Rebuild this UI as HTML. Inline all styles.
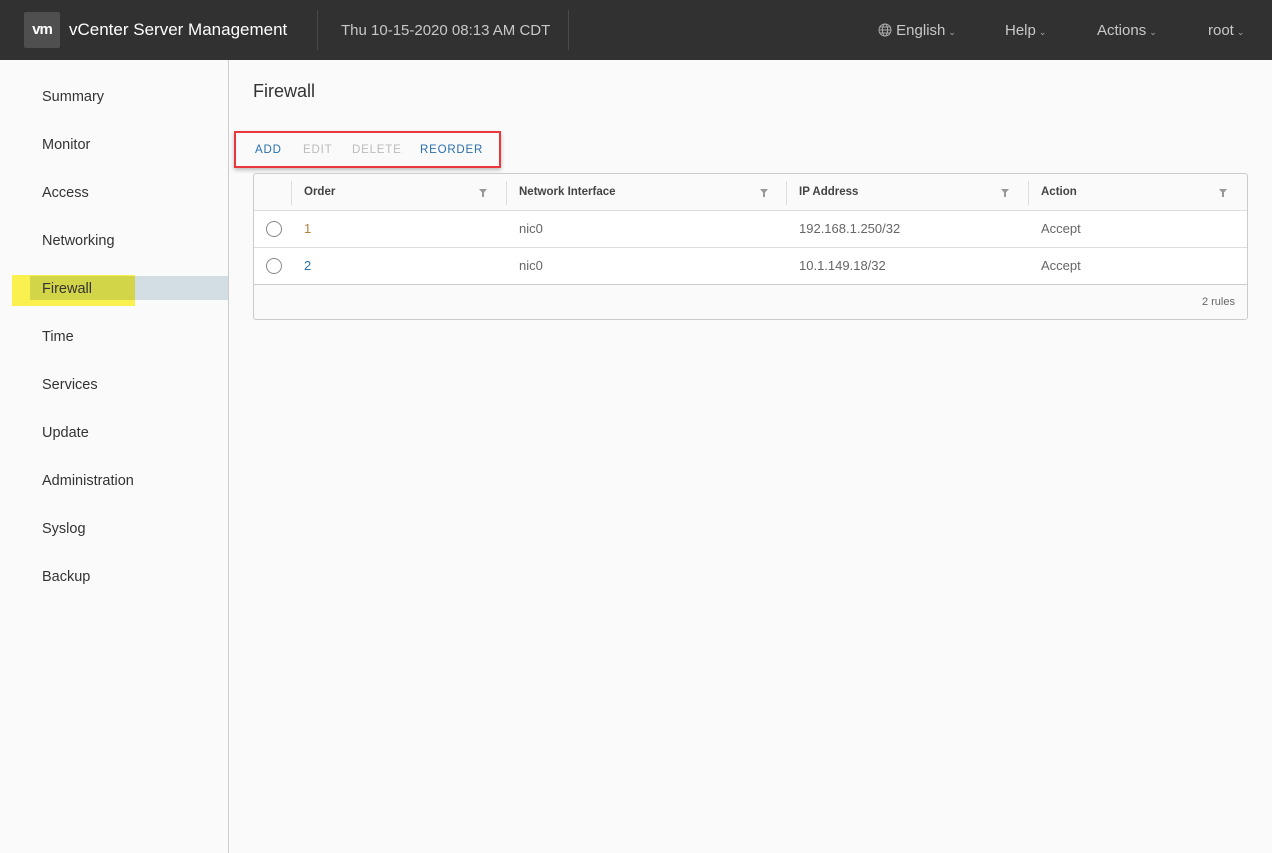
<!DOCTYPE html>
<html><head><style>
*{margin:0;padding:0;box-sizing:border-box}
body{width:1272px;height:853px;background:#fafafa;font-family:"Liberation Sans",sans-serif;position:relative;overflow:hidden;color:#333}
.hdr{position:absolute;left:0;top:0;width:1272px;height:60px;background:#313131}
.a{position:absolute;white-space:nowrap}
.logo{left:24px;top:12px;width:36px;height:36px;background:#4f4f4f;border-radius:2px;color:#fff;font-weight:bold;font-size:15px;text-align:center;line-height:36px;letter-spacing:-1px}
.sep{position:absolute;top:10px;width:1px;height:40px;background:#4a4a4a}
.nav{color:#c8c8c8;font-size:15px;top:21px}
.car{font-size:9px;color:#aaa;margin-left:3px}
.side{position:absolute;left:228px;top:60px;width:1px;height:793px;background:#ccc}
.si{position:absolute;left:42px;font-size:14.5px;color:#333}
.tb{position:absolute;left:253px;top:173px;width:995px;height:147px;border:1px solid #ccc;border-radius:3px;background:#fafafa}
.row{position:absolute;left:0;width:993px;height:37px;background:#fff;border-top:1px solid #ddd}
.th{font-size:11.5px;font-weight:bold;color:#444;top:12px}
.td{font-size:13px;color:#666;top:10px}
.vs{position:absolute;top:7px;width:1px;height:24px;background:#ddd}
.f{position:absolute;top:14px}
.rad{position:absolute;left:12px;top:10px;width:16px;height:16px;border:1px solid #888;border-radius:50%;background:#fff}
.btn{font-size:11.5px;letter-spacing:.8px;top:143px}
</style></head><body>
<div class="hdr">
<div class="a logo">vm</div>
<div class="a" style="left:69px;top:20px;font-size:17px;color:#fff">vCenter Server Management</div>
<div class="sep" style="left:317px"></div>
<div class="a" style="left:341px;top:22px;font-size:15px;color:#c8c8c8">Thu 10-15-2020 08:13 AM CDT</div>
<div class="sep" style="left:568px"></div>
<div class="a nav" style="left:878px;top:22px"><svg width="14" height="14" viewBox="0 0 14 14" style="vertical-align:-2px" fill="none" stroke="#aaa"><circle cx="7" cy="7" r="6"/><ellipse cx="7" cy="7" rx="2.6" ry="6"/><path d="M1 7h12M2 4h10M2 10h10"/></svg> English<span class="car">&#8964;</span></div>
<div class="a nav" style="left:1005px;top:22px">Help<span class="car">&#8964;</span></div>
<div class="a nav" style="left:1097px;top:22px">Actions<span class="car">&#8964;</span></div>
<div class="a nav" style="left:1208px;top:22px">root<span class="car">&#8964;</span></div>
</div>
<div class="side"></div>
<div class="a" style="left:12px;top:275px;width:123px;height:31px;background:#faf050"></div>
<div class="a" style="left:30px;top:276px;width:198px;height:24px;background:#d8e3e9;mix-blend-mode:multiply"></div>
<div class="si" style="top:89px">Summary</div>
<div class="si" style="top:137px">Monitor</div>
<div class="si" style="top:185px">Access</div>
<div class="si" style="top:233px">Networking</div>
<div class="si" style="top:281px">Firewall</div>
<div class="si" style="top:329px">Time</div>
<div class="si" style="top:377px">Services</div>
<div class="si" style="top:425px">Update</div>
<div class="si" style="top:473px">Administration</div>
<div class="si" style="top:521px">Syslog</div>
<div class="si" style="top:569px">Backup</div>
<div class="a" style="left:253px;top:81px;font-size:18px;color:#333">Firewall</div>
<div class="a" style="left:234px;top:131px;width:267px;height:37px;border:2px solid #e8383d;box-shadow:0 2px 4px rgba(0,0,0,.25)"></div>
<div class="a btn" style="left:255px;color:#2a70ad;top:144px">ADD</div>
<div class="a btn" style="left:303px;color:#bbb;top:144px">EDIT</div>
<div class="a btn" style="left:352px;color:#bbb;top:144px">DELETE</div>
<div class="a btn" style="left:420px;color:#2a70ad;top:144px">REORDER</div>
<div class="tb">
<div class="vs" style="left:37px"></div><div class="vs" style="left:252px"></div><div class="vs" style="left:532px"></div><div class="vs" style="left:774px"></div>
<div class="a th" style="left:50px">Order</div><svg class="f" style="left:224px" width="10" height="10" viewBox="0 0 10 10"><path d="M1 1h8L6 4.5V9H4V4.5z" fill="#999"/></svg>
<div class="a th" style="left:265px">Network Interface</div><svg class="f" style="left:505px" width="10" height="10" viewBox="0 0 10 10"><path d="M1 1h8L6 4.5V9H4V4.5z" fill="#999"/></svg>
<div class="a th" style="left:545px">IP Address</div><svg class="f" style="left:746px" width="10" height="10" viewBox="0 0 10 10"><path d="M1 1h8L6 4.5V9H4V4.5z" fill="#999"/></svg>
<div class="a th" style="left:787px">Action</div><svg class="f" style="left:964px" width="10" height="10" viewBox="0 0 10 10"><path d="M1 1h8L6 4.5V9H4V4.5z" fill="#999"/></svg>
<div class="row" style="top:36px"><div class="rad"></div><div class="a td" style="left:50px;color:#b08040">1</div><div class="a td" style="left:265px">nic0</div><div class="a td" style="left:545px">192.168.1.250/32</div><div class="a td" style="left:787px">Accept</div></div>
<div class="row" style="top:73px"><div class="rad"></div><div class="a td" style="left:50px;color:#2a70ad">2</div><div class="a td" style="left:265px">nic0</div><div class="a td" style="left:545px">10.1.149.18/32</div><div class="a td" style="left:787px">Accept</div></div>
<div class="a" style="left:0;top:110px;width:993px;height:1px;background:#ccc"></div>
<div class="a" style="right:12px;top:122px;font-size:11px;color:#666">2 rules</div>
</div>
</body></html>
